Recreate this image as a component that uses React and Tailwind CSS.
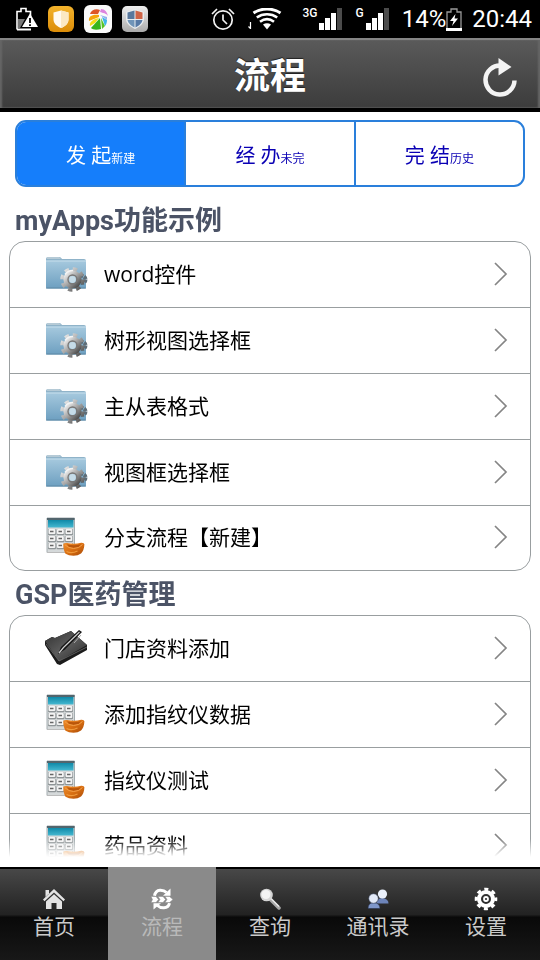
import { useState } from 'react';
import clsx from 'clsx';

const SECTIONS = [
  {
    title: 'myApps功能示例',
    items: [
      { label: 'word控件', icon: 'folder' },
      { label: '树形视图选择框', icon: 'folder' },
      { label: '主从表格式', icon: 'folder' },
      { label: '视图框选择框', icon: 'folder' },
      { label: '分支流程【新建】', icon: 'calculator' },
    ],
  },
  {
    title: 'GSP医药管理',
    items: [
      { label: '门店资料添加', icon: 'notebook' },
      { label: '添加指纹仪数据', icon: 'calculator' },
      { label: '指纹仪测试', icon: 'calculator' },
      { label: '药品资料', icon: 'calculator' },
    ],
  },
];

const TABS = [
  { id: 'start', label: '发 起', hint: '新建' },
  { id: 'pending', label: '经 办', hint: '未完' },
  { id: 'done', label: '完 结', hint: '历史' },
];

const NAV = [
  { id: 'home', label: '首页', Icon: HomeIcon },
  { id: 'flow', label: '流程', Icon: FlowIcon },
  { id: 'search', label: '查询', Icon: SearchIcon },
  { id: 'contacts', label: '通讯录', Icon: ContactsIcon },
  { id: 'settings', label: '设置', Icon: SettingsIcon },
];

/* ---------- status bar ---------- */

function BatteryAlertIcon() {
  return (
    <svg width="22" height="24" viewBox="0 0 22 24" fill="none">
      <path d="M1 22.500V4.500h4V1.500h5v3h4.500v5" stroke="#fff" strokeWidth="1.600" />
      <path d="M2 12h7l-5 9H2z" fill="#777" />
      <path d="M1 22.500h14" stroke="#fff" strokeWidth="2" />
      <path d="M14 6.500L22 20H6z" fill="#fff" />
      <path d="M14 11v5M14 17.200v1.800" stroke="#000" strokeWidth="1.800" />
    </svg>
  );
}

function GuardBadge() {
  return (
    <svg width="26" height="26" viewBox="0 0 26 26">
      <defs>
        <linearGradient id="guard" x1="0" y1="0" x2="0" y2="1">
          <stop offset="0" stopColor="#f3b32c" />
          <stop offset="1" stopColor="#db8c08" />
        </linearGradient>
      </defs>
      <rect width="26" height="26" rx="6" fill="url(#guard)" />
      <path d="M13 4.500l7.500 2v7c0 4.500-4 7-7.500 8.500C9.500 20.500 5.500 18 5.500 13.500v-7z" fill="#fffaf0" />
      <path d="M13 4.500l7.500 2v7c0 4.500-4 7-7.500 8.500z" fill="#fbe8c2" />
    </svg>
  );
}

function PinwheelBadge() {
  return (
    <svg width="28" height="28" viewBox="0 0 28 28">
      <rect width="28" height="28" rx="6" fill="#fafafa" />
      <path d="M6 9C7 5 12 3 16 5l-2 4z" fill="#dd5527" />
      <path d="M17 4c4 0 6 3 7 7-2-3-5-3-8-4z" fill="#dd83df" />
      <path d="M5 16c-1-5 4-7 10-6v2z" fill="#f5a60b" />
      <path d="M6 21c-1-4 3-7 9-8l-4 5z" fill="#f5dc19" />
      <path d="M7 23l9-10 1 11c-4 1-8 1-10-1z" fill="#38b51d" />
      <path d="M17 13l4 8-3 3z" fill="#58c322" />
      <path d="M18 12l5 3c0 3-1 5-2 6z" fill="#3db7e7" />
      <path d="M16 10l7 2v3z" fill="#92b2f0" />
    </svg>
  );
}

function ShieldBadge() {
  return (
    <svg width="26" height="26" viewBox="0 0 26 26">
      <defs>
        <linearGradient id="steel" x1="0" y1="0" x2="0" y2="1">
          <stop offset="0" stopColor="#eee" />
          <stop offset="1" stopColor="#aaa" />
        </linearGradient>
      </defs>
      <rect width="26" height="26" rx="5" fill="url(#steel)" />
      <path d="M13 3l9 3v7c0 5-5 8-9 10-4-2-9-5-9-10V6z" fill="#e9edf0" />
      <path d="M12.500 4.500V13H5.500V6.500z" fill="#59789d" />
      <path d="M13.500 4.500V13h7V6.500z" fill="#cf6447" />
      <path d="M12.500 14v7.500C9 20 6 17 5.500 14z" fill="#6f94b8" />
      <path d="M13.500 14v7.500C17 20 20 17 20.500 14z" fill="#577aa6" />
    </svg>
  );
}

function AlarmIcon() {
  return (
    <svg width="26" height="24" viewBox="0 0 26 24" fill="none" stroke="#f2f2f2">
      <circle cx="13" cy="13" r="9.200" strokeWidth="1.700" />
      <path d="M13 7.500V13l4 4M2 7l5-5M24 7l-5-5" strokeWidth="1.700" />
    </svg>
  );
}

function WifiIcon() {
  return (
    <svg width="34" height="22" viewBox="0 0 34 22" fill="none" stroke="#fff">
      <path d="M2.500 14v7M.5 18.500l2 2" strokeWidth="1.200" />
      <path d="M5.500 5c8-5.300 19-5.300 27 0" strokeWidth="3" />
      <path d="M8.800 9.500c6-4.300 14.400-4.300 20.400 0" strokeWidth="2.600" />
      <path d="M12 13.800c4.300-3.200 9.700-3.200 14 0" strokeWidth="2.600" />
      <path d="M15 16.500c2.500-1.600 5.500-1.600 8 0l-4 5z" fill="#fff" stroke="none" />
    </svg>
  );
}

function SignalIcon() {
  return (
    <svg width="24" height="22" viewBox="0 0 24 22" fill="#fff">
      <path d="M0 15h5v7H0zM6 10h5v12H6zM12 5h5v17h-5z" />
      <path d="M18 0h5v22h-5z" fill="#4b4b4b" />
    </svg>
  );
}

function ChargingIcon() {
  return (
    <svg width="16" height="23" viewBox="0 0 16 23" fill="none">
      <path d="M1 20V4h4V1h6v3h4v16" stroke="#999" strokeWidth="1.300" />
      <path d="M0 20h16v3H0z" fill="#fff" />
      <path d="M9.500 6L4 13h3.500L6 18l6-7.500H8.500z" fill="#fff" />
    </svg>
  );
}

function StatusBar() {
  return (
    <div className="flex h-[38px] shrink-0 items-center justify-between bg-black pl-4 pr-2 font-[family-name:Roboto,sans-serif] text-white">
      <div className="flex items-center gap-[10px]">
        <BatteryAlertIcon />
        <GuardBadge />
        <PinwheelBadge />
        <ShieldBadge />
      </div>
      <div className="flex items-center">
        <AlarmIcon />
        <span className="ml-3"><WifiIcon /></span>
        <span className="ml-5 self-start pt-[3px] text-[12px] font-medium leading-3">3G</span>
        <span className="ml-[2px]"><SignalIcon /></span>
        <span className="ml-3 self-start pt-[3px] text-[12px] font-medium leading-3">G</span>
        <span className="ml-[2px]"><SignalIcon /></span>
        <span className="ml-3 text-[24px] leading-[30px]">14%</span>
        <ChargingIcon />
        <span className="ml-[10px] text-[24px] leading-[30px]">20:44</span>
      </div>
    </div>
  );
}

/* ---------- header ---------- */

function Header() {
  return (
    <header className="grid h-[74px] shrink-0 grid-cols-[1fr_auto_1fr] items-center border-b-4 border-t-2 border-b-black border-t-[#858585] bg-linear-to-b from-[#5a5a5a] to-[#3c3c3c] px-5 pt-1 shadow-[inset_2px_0_2px_#666,inset_-2px_0_2px_#666]">
      <h1 className="col-start-2 text-[36px] font-bold leading-[48px] text-white [text-shadow:0_-1px_1px_#222]">流程</h1>
      <button type="button" aria-label="刷新" className="justify-self-end">
        <svg width="38" height="42" viewBox="0 0 38 42" fill="none">
          <path d="M32.500 25.500A14.500 14.500 0 1 1 19 10.500" stroke="#f4f4f4" strokeWidth="4.500" />
          <path d="M16.500 3l13 9-13 8.500z" fill="#f4f4f4" />
        </svg>
      </button>
    </header>
  );
}

/* ---------- list icons ---------- */

function FolderGear() {
  return (
    <svg width="46" height="42" viewBox="0 0 46 42">
      <defs>
        <linearGradient id="folder" x1="0" y1="0" x2="0" y2="1">
          <stop offset="0" stopColor="#a6c9de" />
          <stop offset="1" stopColor="#6d9fc0" />
        </linearGradient>
        <linearGradient id="gear" x1="0" y1="0" x2="1" y2="1">
          <stop offset="0" stopColor="#eee" />
          <stop offset="0.500" stopColor="#a2a2a2" />
          <stop offset="1" stopColor="#4d4d4d" />
        </linearGradient>
      </defs>
      <path d="M1 6q0-2 2-2h11q2 0 3 2h22q2 0 2 2v5H1z" fill="#8fb3c9" />
      <path d="M2 4h12l2 2H2z" fill="#b5cad6" />
      <path d="M1 7.500h40V34q0 1.500-1.500 1.500h-37Q1 35.500 1 34z" fill="url(#folder)" />
      <path d="M1 8h40" stroke="#c5deec" />
      <path d="M1 35h40" stroke="#5f88a4" />
      <circle cx="37" cy="26.500" r="3.500" fill="none" stroke="#5e6d77" strokeWidth="4" strokeDasharray="2.700 0.960" />
      <circle cx="27.500" cy="26.500" r="10" fill="none" stroke="url(#gear)" strokeWidth="4.500" strokeDasharray="4.200 3.654" />
      <circle cx="27.500" cy="26.500" r="6.300" fill="none" stroke="url(#gear)" strokeWidth="5.500" />
      <circle cx="27.500" cy="26.500" r="4.500" fill="none" stroke="#777" strokeWidth="1.300" />
      <circle cx="27.500" cy="26.500" r="3.400" fill="#c6dce8" />
      <path d="M20 21.500a9 9 0 0 1 8-4" fill="none" stroke="#f4f4f4" strokeWidth="1.500" />
    </svg>
  );
}

function Calculator() {
  return (
    <svg width="46" height="42" viewBox="0 0 46 42">
      <defs>
        <linearGradient id="ingot" x1="0" y1="0" x2="1" y2="1">
          <stop offset="0" stopColor="#ee8d2c" />
          <stop offset="0.500" stopColor="#d96f12" />
          <stop offset="1" stopColor="#a84a08" />
        </linearGradient>
        <linearGradient id="display" x1="0" y1="0" x2="0" y2="1">
          <stop offset="0" stopColor="#0f89a8" />
          <stop offset="1" stopColor="#45b8d0" />
        </linearGradient>
      </defs>
      <path d="M2 2h27.500v34.500H2z" fill="#d5d9da" />
      <path d="M2 36.500V2h27.500v34.500" fill="none" stroke="#a4adb0" />
      <path d="M2 2h27.500v2H2z" fill="#52656d" />
      <path d="M3 4h25.500v7.500H3z" fill="url(#display)" />
      {[13, 20, 27].map((y) =>
        [3, 11.500, 20].map((x) => (
          <g key={`${x}-${y}`}>
            <rect x={x} y={y} width="8" height="6.200" rx="1" fill="#8f9597" />
            <rect x={x + 0.500} y={y} width="6.800" height="4.900" rx="1" fill="#f4f4f4" />
            <path d={`M${x + 2} ${y + 2.500}h3.500`} stroke="#666" strokeWidth="1.500" />
          </g>
        )),
      )}
      <path d="M2 36.500h18" stroke="#bbb" />
      <path d="M18.200 28q1-1.200 4-1 7 1.500 14-.2 3-.2 3.200 1.500-.2 6-3.400 9.200-3 2.200-7.500 2.200-5 0-8-2-2-3-2.300-9.700z" fill="url(#ingot)" />
      <path d="M22 28.200q7 2 14 0l-3 3.300q-5 1-9-.7z" fill="#b9560b" />
      <path d="M20 28.800q3 3.400 8.500 3.700 6-.2 9-4" fill="none" stroke="#f3a04a" strokeWidth="1" />
      <path d="M21.500 35.500q5 2.500 11-.5" fill="none" stroke="#ef9a3c" strokeWidth="1.200" />
    </svg>
  );
}

function Notebook() {
  return (
    <svg width="46" height="42" viewBox="0 0 46 42">
      <defs>
        <linearGradient id="cover" x1="0" y1="0" x2="1" y2="1">
          <stop offset="0" stopColor="#303030" />
          <stop offset="0.500" stopColor="#5b5b5b" />
          <stop offset="1" stopColor="#292929" />
        </linearGradient>
      </defs>
      <path d="M0 14l7-4 3 1L26 4l16 14v5L15 38l-3-1L0 18z" fill="#1c1c1c" />
      <path d="M0 14l7-4 3 1L26 4l16 14-28 16z" fill="url(#cover)" />
      <path d="M1 17l13 17 28-14" fill="none" stroke="#777" strokeWidth="0.700" />
      <path d="M34 3l3 2-17 17.500-7 4.500 3-7z" fill="#161616" />
      <path d="M34.500 5L18.500 20.500 14 26" fill="none" stroke="#ccc" strokeWidth="1.200" />
      <path d="M36 8l-7 8" stroke="#aaa" />
    </svg>
  );
}

const ROW_ICONS = { folder: FolderGear, calculator: Calculator, notebook: Notebook };

function Row({ label, icon }) {
  const Icon = ROW_ICONS[icon];
  return (
    <li className="h-[66px] border-b border-[#999ea0] last:h-16 last:border-b-0">
      <a href="#open" className="flex h-full items-center pb-[2px] pl-[35px] pr-[22px] text-[21px] leading-7 text-black">
        <Icon />
        <span className="ml-[13px] flex-1">{label}</span>
        <svg width="14" height="24" viewBox="0 0 14 24" fill="none" stroke="#858585" strokeWidth="1.700">
          <path d="M1 1l11 11L1 23" />
        </svg>
      </a>
    </li>
  );
}

function Section({ title, items }) {
  return (
    <section>
      <h2 className="px-[15px] pb-[2px] pt-[6px] font-[family-name:Roboto,'Noto_Sans_CJK_SC',sans-serif] text-[27px] font-bold leading-9 text-[#4b5366]">
        {title}
      </h2>
      <ul className="mx-[9px] overflow-hidden rounded-[16px] border border-[#999ea0]">
        {items.map((item) => (
          <Row key={item.label} {...item} />
        ))}
      </ul>
    </section>
  );
}

/* ---------- bottom navigation ---------- */

function HomeIcon() {
  return (
    <svg width="22" height="22" viewBox="0 0 22 22" fill="#e4e4e4">
      <path d="M11 1L0 11.500l1.500 1.800L11 4.500l9.500 8.800L22 11.500 11 1z" />
      <path d="M3 13.500l8-7.300 8 7.300V21h-5.500v-6h-5v6H3z" />
      <path d="M2.500 2h3.500v3.500L2.500 9z" />
    </svg>
  );
}

function FlowIcon() {
  return (
    <svg width="22" height="22" viewBox="0 0 22 22" fill="none" stroke="#fff">
      <path d="M3.500 7.800Q4.500 2.500 9 2.200q4-.2 6.500 2.300" strokeWidth="3" />
      <path d="M19.500.5v7.300h-7.500z" fill="#fff" stroke="none" />
      <path d="M18.500 15.200q-1 4.300-5.500 4.600-4 .2-6.500-2.300" strokeWidth="3" />
      <path d="M2.500 21.500v-6.300H10z" fill="#fff" stroke="none" />
      <path d="M0 8.500h5l2.500 3L5 14.500H0l1.500-3zM7 8.500h5l2.500 3-2.500 3H7l2-3zM14 8.500h4.500l3.500 3-3.500 3H14l2-3z" fill="#fff" stroke="#8a8a8a" strokeWidth="0.500" />
    </svg>
  );
}

function SearchIcon() {
  return (
    <svg width="22" height="22" viewBox="0 0 22 22">
      <path d="M11.500 11.500L20 20" stroke="#aaa" strokeWidth="3.500" strokeLinecap="round" />
      <path d="M12 10.500L20 18.500" stroke="#eee" strokeWidth="1.200" />
      <circle cx="7.500" cy="7" r="6.300" fill="#d5d5d5" />
      <circle cx="7" cy="6.500" r="4.500" fill="#f3f3f3" />
    </svg>
  );
}

function ContactsIcon() {
  return (
    <svg width="22" height="22" viewBox="0 0 22 22">
      <path d="M9.500 15.500q0-5 5.500-5.500 6.500.5 6.500 5.500z" fill="#6d84b9" />
      <circle cx="15.500" cy="6" r="4.600" fill="#eaf0fb" />
      <path d="M1 20.500q0-5.500 5.500-6 6.500.5 6.500 6z" fill="#7f97ca" stroke="#26304a" strokeWidth="0.600" />
      <circle cx="6.500" cy="10.500" r="4.800" fill="#e3eaf8" stroke="#26304a" strokeWidth="0.600" />
    </svg>
  );
}

function SettingsIcon() {
  return (
    <svg width="24" height="24" viewBox="0 0 24 24" fill="none" stroke="#fff">
      <circle cx="12" cy="12" r="9.800" strokeWidth="3" strokeDasharray="4 3.697" strokeDashoffset="2" />
      <circle cx="12" cy="12" r="7" strokeWidth="4" />
      <circle cx="12" cy="12" r="2" strokeWidth="1.800" />
    </svg>
  );
}

function BottomNav() {
  const [active, setActive] = useState('flow');
  return (
    <nav className="flex h-[93px] shrink-0 border-t-2 border-black bg-[linear-gradient(#484848,#222_50%,#090909_53%,#181818)]">
      {NAV.map(({ id, label, Icon }) => (
        <button
          key={id}
          type="button"
          onClick={() => setActive(id)}
          className={clsx(
            '-mt-[2px] flex flex-1 flex-col items-center gap-[1px] pt-5 text-[21px] leading-7',
            active === id ? 'bg-[#8a8a8a] text-[#b9b9b9]' : 'text-[#cacaca]',
          )}
        >
          <span className="flex h-6 items-center"><Icon /></span>
          {label}
        </button>
      ))}
    </nav>
  );
}

export default function App() {
  const [tab, setTab] = useState('start');
  return (
    <div className="flex h-screen flex-col bg-white font-[family-name:'Open_Sans','Noto_Sans_CJK_SC',sans-serif]">
      <StatusBar />
      <Header />
      <main className="min-h-0 flex-1 overflow-y-auto pt-2 [mask-image:linear-gradient(to_bottom,#000_calc(100%-28px),transparent_calc(100%-10px))] [scrollbar-width:none]">
        <div className="mx-[15px] mb-[10px] flex h-[67px] divide-x-2 divide-[#2a7fdb] overflow-hidden rounded-[11px] border-2 border-[#2a7fdb]">
          {TABS.map(({ id, label, hint }) => (
            <button
              key={id}
              type="button"
              onClick={() => setTab(id)}
              className={clsx(
                'flex flex-1 items-baseline justify-center pt-5 text-[20px] leading-7',
                tab === id ? 'bg-[#157efb] text-white' : 'text-[#0a00b4]',
              )}
            >
              {label}
              <small className="text-[12px]">{hint}</small>
            </button>
          ))}
        </div>
        {SECTIONS.map((section) => (
          <Section key={section.title} {...section} />
        ))}
      </main>
      <BottomNav />
    </div>
  );
}
